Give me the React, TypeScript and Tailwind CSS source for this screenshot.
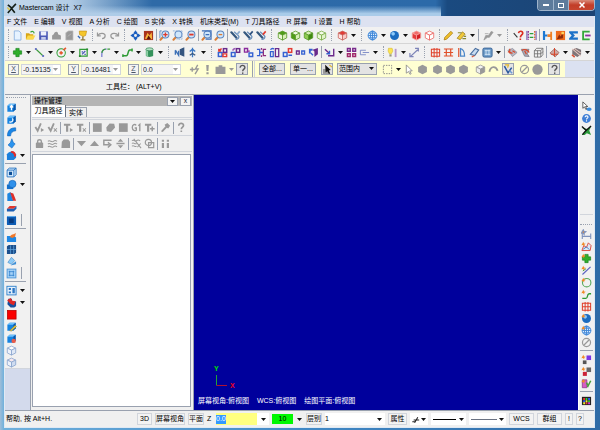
import type { ReactNode } from "react"
import clsx from "clsx"

const cube = (top: string, left: string, right: string, stroke: string) => (
  <g stroke={stroke} strokeWidth="0.9" strokeLinejoin="round">
    <path d="M6 1.2 10.6 3.4 6 5.6 1.4 3.4z" fill={top} />
    <path d="M1.4 3.4 6 5.6V11L1.4 8.6z" fill={left} />
    <path d="M10.6 3.4 6 5.6V11l4.6-2.4z" fill={right} />
  </g>
)

const magnifier = (mark: ReactNode) => (
  <g>
    <path d="M4.6 7.4 1.6 10.6" stroke="#d9803a" strokeWidth="2.2" strokeLinecap="round" />
    <circle cx="7" cy="5" r="3.8" fill="#cfe6fb" stroke="#5c86c0" strokeWidth="1.1" />
    {mark}
  </g>
)

const clipMark = (color: string) => (
  <g fill="none">
    <path d="M1.5 2.5 7 8.5" stroke="#35587f" strokeWidth="2.4" strokeLinecap="round" />
    <path d="M4.5 2 9 6c2 2-.6 5-3 3.6" stroke="#6f93bd" strokeWidth="1.5" />
    <path d="M7.5 5 10.6 1.5" stroke={color} strokeWidth="1.8" />
  </g>
)

const solid = (extra: ReactNode) => (
  <g>
    <path d="M1.5 4 4 1.8h6.5v6L8 10.5H1.5z" fill="#1683e0" />
    <path d="M1.5 4 4 1.8h6.5L8 4z" fill="#6fc0fb" />
    <path d="M8 4l2.5-2.2v6L8 10.5z" fill="#0a56ab" />
    {extra}
  </g>
)

const boxes = (a: string, b: string, link: ReactNode) => (
  <g fill="none" strokeWidth="1.6">
    <rect x="1.5" y="6" width="4" height="4.3" stroke={a} />
    <rect x="7" y="1.8" width="3.6" height="4" stroke={b} />
    {link}
  </g>
)

const hex = <path d="M6 .8 10.8 3.3v5.4L6 11.2 1.2 8.700v-5.400z" fill="#999" />
const spark = <path d="M2.5.8 3.3 2.6 5.2 3 3.6 4 3.4 6 2.2 4.4.4 4.6 1.4 3z" fill="#f08a24" />
const picture = (
  <g>
    <rect x="1" y="1" width="10" height="10" fill="#a9331d" />
    <path d="M2 9.5 5 3l2 3 2.5-3.5L10 10z" fill="#f7b23b" />
    <path d="M4 10 6 6l3 4z" fill="#5d160c" />
  </g>
)
const arrow = <path d="M2.5 1 9 7.5H6.3L7.8 10.6 6.5 11.2 5 8.2 2.5 10z" fill="#fff" stroke="#888" strokeWidth="0.9" />
const forbid = (
  <g fill="none" stroke="#999" strokeWidth="1.3">
    <circle cx="6" cy="6" r="4.4" />
    <path d="M3 9 9 3" />
  </g>
)
const globe = (
  <g fill="none" stroke="#3d85d8" strokeWidth="1">
    <circle cx="6" cy="6" r="4.8" fill="#dceeff" />
    <ellipse cx="6" cy="6" rx="2.2" ry="4.8" />
    <path d="M1.2 6h9.6M2 3.5h8M2 8.5h8M6 1.2v9.6" />
  </g>
)
const ball = (
  <g>
    <circle cx="6" cy="6" r="4.9" fill="#1b6cc0" />
    <circle cx="4.5" cy="4.2" r="2" fill="#8ecbfa" />
  </g>
)
const plus = <path d="M4.2 1.5h3.6v2.7h2.7v3.6H7.8v2.7H4.2V7.8H1.5V4.2h2.7z" fill="#2fae2b" stroke="#15801a" strokeWidth="0.7" />
const help = (
  <g fill="none" stroke="#555" strokeWidth="1.5">
    <path d="M3.4 4c0-3.4 5.4-3.2 5.2 0C8.500 5.6 6.2 5.7 6.2 8" />
    <path d="M6.2 9.2v1.6" />
  </g>
)
const grid = <path d="M1.500 2.500h9v7.500h-9zM1.500 6.200h9M4.500 1v10.500M7.600 1v10.500" fill="none" stroke="#e0402a" strokeWidth="1.1" />
const tick = (mark: ReactNode) => (
  <g fill="none" stroke="#999" strokeWidth="2">
    <path d="M1.500 5.500 4 9.500 7.500 1.500" />
    {mark}
  </g>
)
const tool = (mark: ReactNode) => (
  <g fill="none" stroke="#999">
    <path d="M1 3h7M4.500 3v7.500" strokeWidth="2.4" />
    {mark}
  </g>
)
const smallX = <path d="M7.4 6.8 10.8 10.4M10.8 6.8 7.4 10.4" strokeWidth="1.1" />
const smallPlay = <path d="M7.5 6.5v4.4L11 8.7z" fill="#999" stroke="none" />

const icons: Record<string, ReactNode> = {
  new: <path d="M2.5 1h5l2.300 2.300V11H2.500z" fill="#e6f2ff" stroke="#86aede" strokeWidth="0.9" />,
  open: (
    <g>
      <path d="M1 3.5h3.5l1 1H9V10H1z" fill="#d9a514" />
      <path d="M3 6h8.4L9 10.4H1z" fill="#fbd849" />
      <path d="M6 2.4c2-1.6 3.6-.8 4 1.2" fill="none" stroke="#39a336" strokeWidth="1.3" />
    </g>
  ),
  save: (
    <g>
      <path d="M1.3 1.5h9.4v9.2H1.3z" fill="#4a57b5" />
      <path d="M3 1.5h6V6H3z" fill="#eef1fb" />
      <path d="M3.5 7.6h5v3.1h-5z" fill="#c3c9ea" />
    </g>
  ),
  print: <path d="M3 4.500C4 .8 8.400 1 7.600 4.600L10.800 6v4.400H1.200V6z" fill="#999" />,
  page: <path d="M2 3 5 1h4.800v10H2zM4 7l4-3" fill="#999" stroke="#bbb" strokeWidth="0.8" />,
  trophy: (
    <g>
      <path d="M2.5 1.2h8L9.4 6 6.6 7.2 2.8 5z" fill="#f5c62a" stroke="#c48e10" strokeWidth="0.7" />
      <path d="M6.4 7v3.4M4 10.8h5" stroke="#8f7a3c" strokeWidth="1.5" />
      <path d="M1 6.4 3.4 9" stroke="#2b62b2" strokeWidth="1.4" />
    </g>
  ),
  undo: <path d="M1.6 2.8v3.6h3.6M2 6C4 2.6 10 3 10 6.4 10 8.4 8.4 9.4 6.6 9.4" fill="none" stroke="#999" strokeWidth="1.3" />,
  redo: <path d="M10.4 2.8v3.6H6.8M10 6C8 2.6 2 3 2 6.4c0 2 1.6 3 3.4 3" fill="none" stroke="#999" strokeWidth="1.3" />,
  pan: (
    <g>
      <path d="M6 .4 8.2 3.4H3.8zM6 11.6 3.8 8.6h4.4zM.4 6l3-2.2v4.4zM11.6 6l-3 2.2V3.8z" fill="#1d5fc0" />
      <circle cx="6" cy="6" r="2.3" fill="none" stroke="#1d5fc0" strokeWidth="1.4" />
    </g>
  ),
  picture,
  zoomFit: magnifier(
    <g>
      <path d="M7 2.6v4.8M4.6 5h4.8" stroke="#e03a2c" strokeWidth="1.5" />
      <path d="M1 1h2M1 1v8" stroke="#5c86c0" />
    </g>
  ),
  zoomWin: magnifier(<path d="M1 1h10v9H5" fill="none" stroke="#8fb2dd" strokeDasharray="2 1" />),
  zoomOut: magnifier(<path d="M4.6 5h4.8" stroke="#e03a2c" strokeWidth="2" />),
  zoomSel: magnifier(<path d="M1 1h10v9H5M5 5h4" fill="none" stroke="#3c6fba" strokeWidth="1.2" />),
  zoomHalf: magnifier(<path d="M5 5h4" stroke="#e07a2c" strokeWidth="1.4" />),
  rotA: clipMark("#88a8cc"),
  rotB: clipMark("#2b4f7d"),
  rotC: clipMark("#e23b2e"),
  cubeTop: cube("#4f9c18", "#eaf7d6", "#d8efb8", "#5a9a2a"),
  cubeFront: cube("#f1fae2", "#4f9c18", "#d8efb8", "#5a9a2a"),
  cubeRight: cube("#d8efb8", "#8fcb52", "#3f8a10", "#5a9a2a"),
  cubeIso: cube("#f4fbe9", "#eaf7d6", "#e0f2c8", "#79ad48"),
  cubeRed: cube("#e23a34", "#fde3e0", "#f9c9c5", "#c9635c"),
  redSolid: cube("#f26a68", "#e33b3b", "#d21f24", "#f5a09c"),
  redWire: cube("#fff", "#fff", "#fff", "#ec6a66"),
  globe,
  ball,
  pencil: <path d="M1.2 10.8 2 8 8.6 1.4l2 2L4 10z" fill="#f0c02a" stroke="#a67812" strokeWidth="0.8" />,
  erase: (
    <g>
      <path d="M1.2 9 7 2l3 2.4L4.6 10.6z" fill="#f0c93a" stroke="#9a7d20" strokeWidth="0.8" />
      <path d="M2 3h4M7 9.5h4M8.5 7h2.5" stroke="#8b8b30" strokeWidth="1.3" />
    </g>
  ),
  grayPen: <path d="M1 11 3 6h3L9 1.5l2 1L7 8H4.8zM2 4h4" fill="#999" stroke="#999" strokeWidth="0.8" />,
  query: (
    <g fill="none">
      <path d="M.8 3.5 4.800 8" stroke="#333" strokeWidth="1.2" />
      <path d="M6 3.4c.4-3 5-2.6 4.6.2C10.4 5.4 8.3 5.4 8 8M8 9.4v1.4" stroke="#dc2c20" strokeWidth="1.8" />
    </g>
  ),
  compare: (
    <g fill="none" strokeWidth="1.4">
      <path d="M2.5 1v10" stroke="#8b2f8f" strokeDasharray="2 1" />
      <path d="M9.5 1v10" stroke="#e0662a" strokeDasharray="2 1" />
      <path d="M4 4h4M4 8h4" stroke="#2c9e3a" />
      <path d="M1 1v10M11 1v10" stroke="#5b3ea3" strokeWidth="1" />
    </g>
  ),
  align: (
    <g>
      <path d="M1 1h2.4v10H1zM3 5h3v2H3z" fill="#1b78d2" />
      <path d="M6 4.5h3V2h2v9H9V7.5H6z" fill="#f08024" />
    </g>
  ),
  flame: (
    <g>
      <rect x="1" y="1" width="10" height="10" fill="#ee6b1c" />
      <path d="M2 10 4.6 5 6 7l3-4.5L8.6 9z" fill="#8e2a0c" />
      <circle cx="8.4" cy="3.4" r="1.6" fill="#ffd35c" />
    </g>
  ),
  sigma: <path d="M1.2 1.3h9.6v2.4H5.4L7.6 6 5.4 8.3h5.4v2.4H1.2V9L4 6 1.2 3z" fill="#1d72c8" />,
  exit: (
    <g fill="none" strokeWidth="2">
      <path d="M9.5 1.8H2.3v8.4h7.2" stroke="#35a83a" />
      <path d="M4.5 6h6" stroke="#8a2fa0" />
    </g>
  ),
  plus,
  line: (
    <g>
      <path d="M2 2.2 10 9.8" stroke="#3c9a3c" strokeWidth="1.2" />
      <path d="M1 1.2h2v2H1zM9 8.8h2v2H9z" fill="#6b73c9" />
    </g>
  ),
  circle: (
    <g fill="none">
      <circle cx="5.6" cy="6.4" r="4.6" stroke="#2e9b35" strokeWidth="1.1" />
      <path d="M5.6 4.6v3.6M3.8 6.4h3.6M8.200 3.4l2.600-2.400" stroke="#e5572e" strokeWidth="1.8" />
    </g>
  ),
  rect: (
    <g fill="none">
      <path d="M2 2.5h8V10H2z" stroke="#2e9b35" strokeWidth="1.3" />
      <path d="M4.4 8 8 4.4M4 5.4h1.5M7 8h1.5" stroke="#4658b8" strokeWidth="1.3" />
      <path d="M9 1.5h2v2H9zM1 9h2v2H1z" fill="#2b8a30" />
    </g>
  ),
  fillet: (
    <g fill="none">
      <path d="M2 11V7.6C2 4 4 2.2 7.4 2.2" stroke="#7076cf" strokeWidth="1.3" />
      <path d="M2 6.4C2.2 4 4 2.4 6.2 2.2M8 2.2h3" stroke="#3a9a3e" strokeWidth="1.4" />
    </g>
  ),
  spline: <path d="M1 9.6h3.6c3 0 1-6 4-6.4H11M1 8v3M11 1.6V5" fill="none" stroke="#2e9b35" strokeWidth="1.6" />,
  cylinder: (
    <g>
      <path d="M2 2.4v7.200C3.200 11.200 8.800 11.200 10 9.600V2.400z" fill="#34925b" />
      <path d="M2.400 2.4h2v8l-2-.8z" fill="#8fd0a6" />
      <ellipse cx="6" cy="2.5" rx="4" ry="1.6" fill="#b5e2c4" stroke="#2b7c4c" strokeWidth="0.7" />
    </g>
  ),
  mirror: (
    <g fill="none" strokeWidth="1.5">
      <path d="M1.5 3.5 5 9V4M1.5 3.5v5" stroke="#3b6fb6" />
      <path d="M10.5 1.5v8L7 8V3z" fill="#35557f" stroke="#35557f" />
    </g>
  ),
  axis: (
    <g fill="none" stroke="#3a78c4" strokeWidth="1.4">
      <path d="M6 .8v10.4M3 5l3-2.6L9 5" />
      <path d="M3 9l3-2 3 2" stroke="#35557f" />
    </g>
  ),
  xformA: boxes("#3461d2", "#6a2a8c", <path d="M2 4.5 5 1.6M2 2v2.5h2.6M6.5 7.5h4v3h-4z" stroke="#e23c35" />),
  xformB: boxes("#3461d2", "#6a2a8c", <path d="M3 4c.5-2 1.5-2.4 3-2.4" stroke="#9b59b6" />),
  xformC: (
    <g fill="none" strokeWidth="1.5">
      <path d="M1.600 1.600h3.400v4H1.600zM4 4.500h3.400" stroke="#8a2a9c" />
      <path d="M6.600 6.600h4v3.800h-4z" stroke="#3461d2" />
    </g>
  ),
  xformD: (
    <g fill="none" strokeWidth="1.4">
      <path d="M1 2.5h3v7H1M4 6h4" stroke="#3461d2" />
      <path d="M11 2.5H8v7h3M6 1v2M6 9v2" stroke="#8a2a7c" />
    </g>
  ),
  xformE: (
    <g fill="none" strokeWidth="1.4">
      <path d="M1.6 5h3v5.4h-3zM1.6 3c1-1.6 2.4-1.6 4-1" stroke="#3461d2" />
      <path d="M7 1.8h3.6v8.6H7z" stroke="#6a2a8c" />
    </g>
  ),
  xformF: boxes("#3461d2", "#e23c35", <path d="M7 9h4" stroke="#3461d2" />),
  xformG: (
    <g fill="none" strokeWidth="1.5">
      <path d="M1.6 4.4h3v3.4h-3z" stroke="#6a2a8c" />
      <path d="M7.4 4.4h3v3.4h-3z" stroke="#3461d2" />
    </g>
  ),
  xformH: (
    <g>
      <path d="M1 2h4v2H3v3H1z" fill="#3461d2" />
      <path d="M5 3 10.8 1v7L7 11V5z" fill="#6a2a8c" />
      <path d="M3 6.5 5.5 9" stroke="#3461d2" strokeWidth="1.4" />
    </g>
  ),
  trim: (
    <g fill="none" strokeWidth="1.5">
      <path d="M1 2.4 6 7M4.4 9.6h6.2V2" stroke="#6a2a8c" />
      <path d="M2.6 7.4H6V4" stroke="#3461d2" />
    </g>
  ),
  array: (
    <g fill="none" strokeWidth="1.6">
      <path d="M1.6 1.6h3v3h-3zM7.4 1.6h3v3h-3z" stroke="#7a2a8c" />
      <path d="M1.6 7.4h3v3h-3zM7.4 7.4h3v3h-3z" stroke="#a02a6c" />
    </g>
  ),
  stretch: <path d="M1.5 3.5h6M1.5 8.5h6M1.5 3.5v5M4 6h7" fill="none" stroke="#8592c9" strokeWidth="1.1" />,
  bulb: (
    <g>
      <path d="M1.6 1.4h4l.8 3-1.6 3H2.6l-1.4-3z" fill="#fbe451" stroke="#d4b52a" strokeWidth="0.6" />
      <path d="M2.6 8h2.4v2.4H2.6z" fill="#9a9a78" />
      <path d="M9.4 2v9" stroke="#b79ac9" strokeWidth="2" />
    </g>
  ),
  measure: <path d="M2 10 9.5 3M6.6 1.6h3.6V5M1 6.6v4h4" fill="none" stroke="#7d84b8" strokeWidth="1.3" />,
  grid,
  ruled: <path d="M1 2.2h10M1 6h10M1 9.8h10M3.6 2v8M8.4 2v8" fill="none" stroke="#e0502a" strokeWidth="1.3" />,
  revolve: (
    <g fill="none" strokeWidth="1.3">
      <path d="M3 1v10" stroke="#e0502a" />
      <path d="M5 1.6c3 1 4.4 5 4.4 8.4H5z" stroke="#4a86c8" />
    </g>
  ),
  sweep: (
    <g fill="none" stroke="#4a6f9f" strokeWidth="1.2">
      <path d="M1.4 8 7 1.6l3.6 1.6-4.4 6.2z" fill="#c9dcf2" />
      <path d="M3 11 6 9.4" stroke="#e0502a" />
    </g>
  ),
  net: (
    <g>
      <rect x="1" y="1.2" width="10" height="9.8" rx="1.5" fill="#6f9cc8" stroke="#335f93" />
      <path d="M3 4h6M3 8h6M4.4 3v6M7.6 3v6" stroke="#dcebfa" strokeWidth="0.9" />
    </g>
  ),
  surfA: (
    <g>
      <path d="M1 3.6 6 1.6 11 6 6 10.4z" fill="#b9b9c4" stroke="#7c7c8c" strokeWidth="0.7" />
      <path d="M3 2v5M1 5l5 2M6 4l3 2" stroke="#d8482c" strokeWidth="1.3" />
    </g>
  ),
  surfB: (
    <g>
      <path d="M1.4 2.5h8.4L8 7.4l2 3L5 10z" fill="#a8a8b4" stroke="#6a6a78" strokeWidth="0.7" />
      <path d="M2 4c3-3 7 0 8 2M5 4l2 4" fill="none" stroke="#d8482c" strokeWidth="1.3" />
    </g>
  ),
  wire: <path d="M1.5 4h7v7h-7zM1.5 4 4 1.4h6.8L8.5 4M8.5 11l2.3-2.6v-7M1.5 7.4h7l2.3-2.4M5 4v7" fill="none" stroke="#6c6c6c" strokeWidth="0.9" />,
  surfC: (
    <g>
      <path d="M1 6.6 6 2l5 4-4 4.6z" fill="#cfa9a4" stroke="#8b5450" strokeWidth="0.7" />
      <path d="M6 1v9.6M2 8h8" stroke="#d8482c" strokeWidth="1.1" />
    </g>
  ),
  surfD: (
    <g>
      <path d="M1.4 3 6 1l5 2v5l-4 3-5.6-3z" fill="#7d7478" />
      <path d="M1.4 2 10.6 10M3.5 1.5l7 5" stroke="#e4c4bc" strokeWidth="1.1" />
      <path d="M1 8.4 4 11" stroke="#d8482c" strokeWidth="1.6" />
    </g>
  ),
  fast: <path d="M1 6h5M3.5 3.5v5M9.5 1 7 5.4h3L6.6 11" fill="none" stroke="#999" strokeWidth="1.5" />,
  bang: <path d="M4.6 1h2.8L7 7.6H5zM4.8 9h2.4v2.2H4.8z" fill="#999" />,
  toolbox: <path d="M4 1.4h4V3h3.4v8H.6V3H4z" fill="#999" />,
  help,
  pick: (
    <g>
      <rect x="1" y="5.4" width="6" height="5.4" fill="#999" />
      <path d="M3.4.8 9.6 6.6 7.4 7 9 10.4 7.4 11 6 7.8 4 9z" fill="#111" />
      <path d="M8 1.2 11 3.4" stroke="#e2b82c" strokeWidth="1.3" />
    </g>
  ),
  dash: <path d="M1.5 1.5h9v9h-9z" fill="none" stroke="#888" strokeDasharray="1.6 1.2" />,
  arrow,
  hex,
  grayCube: cube("#f2f2f2", "#ececec", "#999", "#999"),
  curve: <path d="M1.5 8.4C3 2 8.6 2 10.5 7.4" fill="none" stroke="#999" strokeWidth="2" />,
  selFlag: (
    <g fill="none">
      <path d="M1.5 2.4 5.5 9.6 9.5 4" stroke="#2d5a9c" strokeWidth="1.7" />
      <path d="M2 1h4l-1 3" stroke="#e2b82c" strokeWidth="1.4" />
      <path d="M7 7l3 3" stroke="#6b9bd2" strokeWidth="1.6" />
    </g>
  ),
  forbid,
  disc: <circle cx="6" cy="6" r="5.6" fill="#999" />,

  extrude: solid(<path d="M6 9V4.4M4.2 6 6 3.8 7.8 6" fill="none" stroke="#fff" strokeWidth="1.4" />),
  turn: solid(<path d="M3.6 8.6c4 .8 4.6-2 3.4-3.8" fill="none" stroke="#fff" strokeWidth="1.4" />),
  sweepBlue: <path d="M1.6 10.8C1.4 5 5 1.6 10.6 2v3.4C7 5.4 5.4 7 5 10.8z" fill="#1a86e6" stroke="#0b60b5" strokeWidth="0.6" />,
  loft: <path d="M6.4.8 8 5l2 1.4L6.4 11 2.2 7.6 4.8 5z" fill="#2b94ee" stroke="#0b60b5" strokeWidth="0.6" />,
  filletRed: (
    <g>
      <path d="M1 4.6C3 1.4 6 1 8 2l3 3v3.4l-2.6 2.4H1z" fill="#1a7fdc" />
      <path d="M6 1.2c3 0 5 2 5 5L9 8C9 5 8 3 5 2.6z" fill="#e32a26" />
    </g>
  ),
  shell: (
    <g fill="none">
      <path d="M1.200 3.400 3.600 1.200h7.400v7.200l-2.400 2.400H1.200z" fill="#d6ebfd" stroke="#2a74c2" />
      <path d="M1.200 3.400h7.400v7.400M8.600 3.400 11 1.200" stroke="#2a74c2" />
      <rect x="3.200" y="5.200" width="3.400" height="3.600" fill="#0b4d96" />
    </g>
  ),
  bool: (
    <g>
      <path d="M1 6h7v5H1z" fill="#1570cc" />
      <circle cx="7" cy="5.400" r="4" fill="#2f90ea" stroke="#0e5cab" strokeWidth="0.6" />
    </g>
  ),
  draft: (
    <g>
      <path d="M1.4 3 5 1.2l3 9.6H1.4z" fill="#1d86e0" />
      <path d="M4.6 1.6 8 2.6l3 8H7.6z" fill="#e0302a" />
    </g>
  ),
  slab: (
    <g>
      <path d="M1 6.4 4 3.4h7.4l-3 3z" fill="#e0362c" />
      <path d="M1 6.4h7.4v3H1zM8.4 6.4l3-3v3l-3 3z" fill="#1c5fb4" />
    </g>
  ),
  block: (
    <g>
      <rect x="1" y="1.2" width="10" height="9.8" rx="1" fill="#0e5cb4" />
      <rect x="3.4" y="3.8" width="5" height="5" fill="#07397d" />
      <path d="M1.4 1.6h9" stroke="#69b4f2" />
    </g>
  ),
  moveSolid: (
    <g>
      <path d="M1 4.400h8l2 1.600v5H1z" fill="#1e88e5" />
      <path d="M4 5.4C6 2 8 3 10.8 1L10 5 7 6.6z" fill="#f0782a" />
    </g>
  ),
  mesh: (
    <g>
      <path d="M1 2.4 3 1h8v8.6L9.4 11H1z" fill="#1c4f8c" />
      <path d="M1 6h10M5 1.5V11M8.4 1.5V11" stroke="#5fa6e0" strokeWidth="0.8" />
    </g>
  ),
  face: (
    <g>
      <path d="M2 7 6 1.4 9.4 5 6 9z" fill="#8ccaf7" stroke="#4a90cc" strokeWidth="0.7" />
      <path d="M5 10.4 11 9V5.6L8 8z" fill="#3d8fd6" />
    </g>
  ),
  pattern: (
    <g>
      <rect x="1.2" y="1.2" width="9.6" height="9.6" fill="#a5d2f7" stroke="#4c96d8" />
      <path d="M3 4h6M3 8h6M4 3v6M8 3v6" stroke="#3684cf" strokeWidth="0.9" />
    </g>
  ),
  layout: (
    <g>
      <rect x="1" y="1.4" width="10" height="9.4" fill="#e4f1fd" stroke="#2d7fcb" />
      <path d="M3 3.4h2.4v2H3zM3 7h2.4v2H3zM7 3.4h2.6V9H7z" fill="#2c76c4" />
    </g>
  ),
  redBlue: (
    <g>
      <path d="M2.500 2h4v3h4.500v5l-2 1.500H5L1.500 8z" fill="#174f9c" />
      <path d="M1.200 3.600 5 1.200 7 4l3.600.6L8.600 9 5 7.600z" fill="#e02624" />
    </g>
  ),
  red: <rect x="1.500" y="1.500" width="9.500" height="9.500" fill="#fb0000" stroke="#b40000" strokeWidth="0.8" />,
  editSolid: solid(<path d="M4 10.6 10 4.6l1.4 1.4-5.6 5z" fill="#efca3a" stroke="#8d7a1e" strokeWidth="0.5" />),
  delSolid: solid(<circle cx="8.4" cy="8.6" r="2.4" fill="#e85c4a" />),
  wireCube: cube("#fff", "#eef3fb", "#dfe8f6", "#8ba5cf"),
  wireCubeB: cube("#f7e9ee", "#eef3fb", "#cfdcf0", "#8ba5cf"),

  checkAll: tick(smallPlay),
  checkNone: tick(smallX),
  toolPlay: tool(smallPlay),
  toolX: tool(smallX),
  toolPlus: tool(<path d="M9 5v5M6.6 7.4h5" strokeWidth="1.6" />),
  square: <rect x="1" y="1.4" width="9.6" height="9.4" fill="#999" />,
  blob: <path d="M1.4 6 5 1.6 10 2l1 4-4.4 4.8L2 10z" fill="#999" />,
  g1: (
    <g fill="none" stroke="#999" strokeWidth="1.5">
      <path d="M5.6 3.6C4.4 2 1.4 2.6 1.4 6S4.8 10 5.8 8.8V6.6H4M8 4l1.6-1.4V10" />
    </g>
  ),
  wrench: <path d="M1 10 6 4.6 5 3l3-2 3 3-2 3-1.6-.8L3 11zM2 3h2" fill="#999" />,
  ask: <path d="M3 4c0-3.400 5.400-3.200 5.200 0C8.100 5.600 5.800 5.700 5.800 8M5.800 9.200v1.800" fill="none" stroke="#999" strokeWidth="1.8" />,
  lock: (
    <g fill="#999">
      <rect x="2" y="5" width="8" height="6" rx="1" />
      <path d="M4 5.4V3.4c0-2 4-2 4 0v2" fill="none" stroke="#999" strokeWidth="1.5" />
    </g>
  ),
  waves: <path d="M1 3.6c2-2 4 1.6 6 0s3-.6 4 0M1 6.6c2-2 4 1.6 6 0s3-.6 4 0M1 9.6c2-2 4 1.6 6 0s3-.6 4 0" fill="none" stroke="#999" strokeWidth="1.1" />,
  lockDoc: <path d="M2 4 4 1.6h5L11 4v7H1.6z" fill="#999" />,
  down: <path d="M1 3.4h10L6 9z" fill="#999" />,
  up: <path d="M1 8.6h10L6 3z" fill="#999" />,
  insert: <path d="M10.4 2.4H2v5h6M6.4 4.8 9.6 7.4 6.4 10.4" fill="none" stroke="#999" strokeWidth="1.6" />,
  updown: <path d="M6 .8 9 4H3zM6 11.2 3 8h6zM1.6 5.2h8.8v1.6H1.6z" fill="#999" />,
  wavesX: (
    <g fill="none" stroke="#999" strokeWidth="1.1">
      <path d="M1 3c2-2 3 1.6 5 0s3-.6 4 0M1 6c2-2 3 1.6 5 0M1 9c2-2 3 1.6 5 0M3 1l8 10M10.6 6 7 10" />
    </g>
  ),
  clash: (
    <g fill="none" stroke="#999" strokeWidth="1.3">
      <circle cx="4.8" cy="4.8" r="3.4" />
      <path d="M5 5h5.6v5.6H5z" />
    </g>
  ),
  pair: <path d="M2 2h2.400v2H2zM7.400 2h2.400v2H7.400zM2 5.400h2.400V11H2zM7.400 5.400h2.400V11H7.400z" fill="#999" />,

  select: (
    <g>
      <path d="M2 1v7l1.8-1.6 1.6 3 1-.6L5 6h2.4z" fill="#fff" stroke="#333" strokeWidth="0.8" />
      <ellipse cx="8.8" cy="9" rx="2.8" ry="1.8" fill="#3b8ee0" />
    </g>
  ),
  info: (
    <g>
      <circle cx="6" cy="6" r="4.8" fill="#3f7fd6" />
      <path d="M4.4 4.6c.2-2 3.4-1.8 3.2 0C7.5 5.6 6 5.6 6 7M6 8v1.2" fill="none" stroke="#fff" strokeWidth="1.2" />
    </g>
  ),
  logo: (
    <g>
      <path d="M1 3 5 6l-4 5h3l2.4-2L11 11 9 6l2-4.500L7 4.4z" fill="#2c9a3a" />
      <path d="M1 1.6 6 6M11 1 5 6.500 1.500 10.500" fill="none" stroke="#111" strokeWidth="1.4" />
    </g>
  ),
  appLogo: (
    <g>
      <path d="M2 2 6.500 5.500 10.800 1M6 6 2 11M6 6l3.600 4.600" fill="none" stroke="#15201a" strokeWidth="1.8" />
      <path d="M1.500 5 4 7.500" stroke="#d8c44a" strokeWidth="1.600" />
    </g>
  ),
  dim: (
    <g fill="none" stroke="#7f93bd" strokeWidth="1.2">
      <path d="M1.4 2v9M10.6 5v6M2 8h8" />
      {spark}
    </g>
  ),
  redWave: (
    <g>
      <path d="M1 10.4 3 5l3 2 2-5 3 3-1 5.4z" fill="#dbe9f7" stroke="#dd4436" />
      <path d="M2.4 9 6 6.4l3 3" fill="none" stroke="#3c78c0" />
      {spark}
    </g>
  ),
  sparkLine: (
    <g>
      <path d="M1.6 10.4 10.4 2" stroke="#5a62c2" strokeWidth="1.3" />
      <path d="M2 6.5 5.5 4" stroke="#37963a" />
      {spark}
    </g>
  ),
  sparkPlus: <g>{plus}{spark}</g>,
  sparkCircle: (
    <g>
      <circle cx="6.2" cy="6.2" r="4.6" fill="none" stroke="#58a85a" strokeWidth="1.2" />
      {spark}
    </g>
  ),
  sparkSpline: (
    <g>
      <path d="M1.4 10.2h4c2.6 0 .6-4.6 3.4-5H11" fill="none" stroke="#2e9b35" strokeWidth="1.5" />
      {spark}
    </g>
  ),
  sparkBall: <g>{ball}{spark}</g>,
  sparkGlobe: <g>{globe}{spark}</g>,
  purple: (
    <g>
      <path d="M6 1.6h5v5H6z" fill="#7a34e6" />
      <path d="M2 7h4v4H2z" fill="#555" />
      {spark}
    </g>
  ),
  redGray: (
    <g>
      <path d="M6 1.6h5v5H6z" fill="#666" />
      <path d="M2 6.4h4.4v4.4H2z" fill="#cc2236" />
      {spark}
    </g>
  ),
  magenta: (
    <g>
      <path d="M1.4 2h5v8.6h-5z" fill="#d65cc4" stroke="#8c2f88" strokeWidth="0.8" />
      <path d="M7 10 10.6 3M6 5l2 4" stroke="#48a03c" strokeWidth="1.7" />
      {spark}
    </g>
  ),
  palette: (
    <g>
      <rect x="1" y="2" width="10" height="9" fill="#222" />
      <path d="M2.4 3.4h2v2h-2zM5 8h2v2H5z" fill="#e33" />
      <path d="M5 3.4h2v2H5zM7.8 5.8h2v2h-2z" fill="#3c3" />
      <path d="M7.8 3.4h2v2h-2zM2.4 5.8h2v2h-2z" fill="#35f" />
      <path d="M5 5.8h2v2H5zM2.4 8h2v2h-2z" fill="#ee3" />
      <path d="M7.8 8h2v2h-2z" fill="#d3d" />
    </g>
  ),
  point: <path d="M5 9.500 8.500 3.500M4 6.500h6M2.500 8.500h3" stroke="#222" strokeWidth="1.2" />,
}

const Icon = ({ name }: { name: string }) => (
  <svg viewBox="0 0 12 12" className="size-[11px] shrink-0" aria-hidden="true">{icons[name]}</svg>
)

const Triangle = ({ gray = false }: { gray?: boolean }) => (
  <svg viewBox="0 0 5 3" className="w-[5px] h-[3px] shrink-0" aria-hidden="true">
    <path d="M0 0h5L2.5 3z" fill={gray ? "#999" : "#111"} />
  </svg>
)

// ":" grip, "|" divider, "_" spacer, "v" drop-down arrow, anything else is an icon name
const Tools = ({ items, vertical = false }: { items: string; vertical?: boolean }) => (
  <>
    {items.split(" ").map((item, i) => {
      if (item === ":") {
        return <span key={i} className="w-[6px] h-3 shrink-0 flex justify-center"><i className="border-l border-dotted border-gray-400" /></span>
      }
      if (item === "|") {
        return vertical
          ? <span key={i} className="h-[5px] w-full shrink-0 flex items-center"><i className="flex-1 border-t border-gray-400" /></span>
          : <span key={i} className="w-[3px] h-3 shrink-0 flex justify-center"><i className="border-l border-gray-400" /></span>
      }
      if (item === "_") return <span key={i} className="w-[2px] shrink-0" />
      if (item === "v" || item === "v-") {
        return (
          <button key={i} type="button" aria-label="more" className="w-[9px] h-3 shrink-0 flex items-center justify-center">
            <Triangle gray={item === "v-"} />
          </button>
        )
      }
      return (
        <button key={i} type="button" aria-label={item} className="w-[13px] h-3 shrink-0 flex items-center justify-center">
          <Icon name={item} />
        </button>
      )
    })}
  </>
)

const ToolRow = ({ items }: { items: string }) => (
  <div className="h-[17px] flex items-center overflow-hidden bg-[#f1f1f1] border-b border-[#d5d5d5]">
    <Tools items={items} />
  </div>
)

const Coord = ({ axis, value }: { axis: string; value: string }) => (
  <div className="flex items-center gap-[2px] w-[60px] shrink-0">
    <button type="button" aria-label={"lock " + axis} className="size-[11px] border border-gray-400 bg-[#f4f4f4] flex items-center justify-center underline text-gray-600">{axis}</button>
    <div className="flex items-center w-10 h-[11px] bg-white border border-gray-300 pr-[2px]">
      <input aria-label={axis} defaultValue={value} className="min-w-0 flex-1 h-full pl-px bg-[#f4f4f4] text-gray-900 outline-none" />
      <Triangle gray />
    </div>
  </div>
)

const boxed = "h-3 border border-gray-400 bg-[#e3e3e3] flex items-center justify-center shrink-0"

const menus = ["F 文件", "E 编辑", "V 视图", "A 分析", "C 绘图", "S 实体", "X 转换", "机床类型(M)", "T 刀具路径", "R 屏幕", "I 设置", "H 帮助"]

const sideRows = [
  "extrude", "turn", "sweepBlue", "loft", "filletRed v", "|",
  "shell", "bool v", "draft", "slab", "block _ |", "|",
  "moveSolid", "mesh", "face", "pattern _ |", "|",
  "layout v", "redBlue v", "red", "editSolid", "delSolid", "wireCube", "wireCubeB",
]

const rightTop = ["select", "info", "logo"]
const rightBottom = ["dim", "redWave", "sparkPlus", "sparkLine", "sparkCircle", "sparkSpline", "grid", "sparkBall", "sparkGlobe", "forbid", "|", "purple", "redGray", "magenta", "|", "palette"]

const TitleBar = () => (
  <header className="relative h-4 flex items-center pl-[2px] bg-[linear-gradient(90deg,#2f6aa6_0%,#2c6aa9_73%,#1a4a80_75%,#1c4474_100%)]">
    <div className="absolute left-0 bottom-0 w-[74%] h-4 bg-[linear-gradient(180deg,transparent_35%,#a9cbe9_85%)]" />
    <div className="absolute left-0 bottom-0 w-1/4 h-4 bg-[linear-gradient(90deg,#c3d7ea_0%,#b3cde6_45%,transparent_100%)]" />
    <div className="relative flex items-center flex-1">
      <Icon name="appLogo" />
      <h1 className="ml-[2px] whitespace-pre text-black">Mastercam 设计  X7</h1>
    </div>
    <div className="self-start flex h-[11px] border border-t-0 border-[#9fb4cb] rounded-b-sm overflow-hidden">
      <button type="button" aria-label="minimize" className="w-[15px] bg-[#5d7b9b] flex items-center justify-center"><i className="w-[6px] h-[2px] bg-white" /></button>
      <button type="button" aria-label="maximize" className="w-[15px] bg-[#5d7b9b] border-l border-[#9fb4cb] flex items-center justify-center"><i className="w-[6px] h-[5px] border border-white" /></button>
      <button type="button" aria-label="close" className="w-[26px] bg-[linear-gradient(180deg,#d98a78_0%,#c23d28_50%,#c7452f_100%)] border-l border-[#9fb4cb] flex items-center justify-center">
        <svg viewBox="0 0 6 6" className="size-[6px]"><path d="M.5.5 5.5 5.5M5.5.5.5 5.5" stroke="#fff" strokeWidth="1.5" /></svg>
      </button>
    </div>
  </header>
)

const Manager = () => (
  <section className="w-[164px] shrink-0 flex flex-col border-x border-gray-400 bg-[#f0f0f0] px-px">
    <div className="h-[10px] mt-px flex items-center gap-[2px] pl-[2px] bg-[#b4b4b4]">
      <h2 className="flex-1 text-black">操作管理</h2>
      <button type="button" aria-label="panel menu" className="w-[11px] h-[9px] bg-[#f3f3f3] border border-gray-400 flex items-center justify-center"><Triangle /></button>
      <button type="button" aria-label="close panel" className="w-[11px] h-[9px] mr-px bg-[#f3f3f3] border border-gray-400 flex items-center justify-center">x</button>
    </div>
    <div role="tablist" className="flex items-end h-3 border-b border-gray-300">
      <button role="tab" aria-selected="true" className="w-[34px] h-3 bg-white border-r border-gray-500 text-black">刀具路径</button>
      <button role="tab" aria-selected="false" className="w-[21px] h-[10px] border-r border-t border-gray-400 text-black">实体</button>
    </div>
    <div className="flex items-center h-4 mt-px border-t border-gray-300">
      <span className="w-px" />
      <Tools items="checkAll checkNone | toolPlay toolX | square blob square g1 toolPlus | wrench | ask" />
    </div>
    <div className="flex items-center h-[17px] border-y border-gray-300">
      <span className="w-px" />
      <Tools items="lock waves lockDoc | down up insert updown | wavesX clash | pair" />
    </div>
    <div className="flex-1 mt-[2px] mb-[3px] mr-px bg-white border border-gray-400" />
  </section>
)

const Canvas = () => (
  <main className="flex-1 min-w-0 flex flex-col justify-end bg-[#00009c] border-r border-white">
    <svg viewBox="0 0 40 30" className="w-10 h-[30px] ml-[18px] mb-px" fontFamily="Liberation Sans" fontSize="7" fontWeight="700">
      <path d="M4.500 10V20.500" stroke="#1fa03c" />
      <path d="M4.500 20.500H15" stroke="#b01230" />
      <text x="2" y="6" fill="#00e000">Y</text>
      <text x="18" y="23" fill="#f00020">X</text>
    </svg>
    <p className="flex gap-2 pl-1 pb-1 text-white leading-[10px]">
      <span>屏幕视角:俯视图</span>
      <span>WCS:俯视图</span>
      <span>绘图平面:俯视图</span>
    </p>
  </main>
)

const statusButton = "h-3 shrink-0 border border-gray-300 bg-[#f3f3f3] text-center text-black"

const StatusBar = () => (
  <footer className="h-[17px] flex items-center gap-[3px] border-t border-gray-400 bg-[#f0f0f0] pr-[10px] whitespace-nowrap">
    <p className="flex-1 text-black pl-px">帮助, 按 Alt+H.</p>
    <button type="button" className={clsx(statusButton, "w-[15px]")}>3D</button>
    <button type="button" className={clsx(statusButton, "w-[30px]")}>屏幕视角</button>
    <button type="button" className={clsx(statusButton, "w-4")}>平面</button>
    <label htmlFor="depth" className="w-[6px] text-black">Z</label>
    <div className="flex items-center w-[53px] h-3 bg-white pr-[3px]">
      <div className="flex items-center w-[41px] h-3 bg-[#ffff80] mr-auto">
        <input id="depth" defaultValue="0.0" className="w-[10px] h-[9px] bg-[#3399ff] text-white outline-none" />
      </div>
      <Triangle />
    </div>
    <button type="button" className="w-[21px] h-[10px] bg-[#00f800] text-black">10</button>
    <button type="button" aria-label="color list" className="w-[7px] h-3 flex items-center justify-center"><Triangle /></button>
    <button type="button" className={clsx(statusButton, "w-4")}>层别</button>
    <div className="flex items-center w-[60px] h-3 bg-white pr-[3px]">
      <input aria-label="层别" defaultValue="1" className="min-w-0 flex-1 bg-white text-black outline-none" />
      <Triangle />
    </div>
    <button type="button" className={clsx(statusButton, "w-[19px]")}>属性</button>
    <button type="button" aria-label="point style" className="w-[18px] h-3 bg-white flex items-center justify-between pr-[2px]"><Icon name="point" /><Triangle /></button>
    <button type="button" aria-label="line style" className="w-[35px] h-3 bg-white flex items-center justify-between px-[2px]"><i className="w-[23px] h-px bg-black" /><Triangle /></button>
    <button type="button" aria-label="line width" className="w-[37px] h-3 bg-white flex items-center justify-between px-[2px]"><i className="w-[26px] h-px bg-gray-500" /><Triangle /></button>
    <button type="button" className={clsx(statusButton, "w-[25px]")}>WCS</button>
    <button type="button" className={clsx(statusButton, "w-[25px]")}>群组</button>
    <button type="button" className={clsx(statusButton, "w-2")}>!</button>
    <button type="button" className={clsx(statusButton, "w-2")}>?</button>
  </footer>
)

const App = () => {
  return (
    <div className="h-screen min-h-[400px] flex flex-col overflow-hidden pl-1 pr-[5px] pb-[2px] bg-[linear-gradient(90deg,#9fbdd8_0,#6fb0dc_4px,#4189c6_50%,#2f6ba6_100%)] font-['Liberation_Sans','Noto_Sans_CJK_SC',sans-serif] text-[7px] leading-[10px] text-gray-800">
      <TitleBar />
      <div className="flex-1 min-h-0 flex flex-col border-x border-b border-[#dfe9f4] bg-[#f0f0f0]">
        <nav className="h-[11px] flex items-center gap-[7px] pl-[2px] bg-[#dde2f1] whitespace-nowrap">
          {menus.map((menu) => (
            <button key={menu} type="button" className="text-black">{menu}</button>
          ))}
        </nav>
        <ToolRow items=": new open save print page trophy : undo redo : _ pan picture | zoomFit zoomWin zoomOut | zoomSel zoomHalf | rotA rotB rotC : _ cubeTop cubeFront cubeRight cubeIso : _ cubeRed v : _ globe v ball v redSolid redWire : pencil erase v | _ grayPen v- : _ query compare | align flame sigma exit" />
        <ToolRow items=": plus v line v circle v rect v fillet v spline v cylinder v : _ mirror axis v : _ xformA xformB xformC xformD xformE xformF xformG xformH | trim v array stretch v : bulb v measure : _ grid ruled revolve sweep net v | surfA surfB wire | surfC v surfD v" />
        <div className="h-[17px] flex bg-[#dbe1f1] border-b border-[#d0d0d0]">
          <div className="w-[560px] flex items-center pl-[3px] bg-[#ffffd2]">
            <Coord axis="X" value="-0.15135" />
            <Coord axis="Y" value="-0.16481" />
            <Coord axis="Z" value="0.0" />
            <Tools items="fast bang toolbox v-" />
            <button type="button" aria-label="help" className={clsx(boxed, "w-3")}><Icon name="help" /></button>
            <span className="w-[7px] h-4 ml-1 border-l border-gray-400 flex pl-px"><i className="border-l border-gray-300" /></span>
            <button type="button" className={clsx(boxed, "w-[26px] text-black")}>全部...</button>
            <button type="button" className={clsx(boxed, "w-[26px] ml-[5px] text-black")}>单一...</button>
            <button type="button" aria-label="pick" className={clsx(boxed, "w-3 ml-[5px]")}><Icon name="pick" /></button>
            <div className="relative ml-1 w-10 h-3 shrink-0 flex">
              <select aria-label="selection" className="w-full h-3 appearance-none border border-gray-400 bg-[#e3e3e3] pl-px text-black">
                <option>范围内</option>
              </select>
              <span className="absolute right-[3px] top-1 flex pointer-events-none"><Triangle /></span>
            </div>
            <span className="w-1 shrink-0" />
            <Tools items="dash v arrow hex _ hex hex hex _ _ grayCube curve _" />
            <button type="button" aria-label="selFlag" className={clsx(boxed, "w-3")}><Icon name="selFlag" /></button>
            <Tools items="_ _ forbid disc _ _" />
            <button type="button" aria-label="about" className={clsx(boxed, "w-3")}><Icon name="help" /></button>
          </div>
        </div>
        <p className="h-[17px] shrink-0 pl-[101px] leading-[17px] text-black border-b border-gray-400">工具栏： (ALT+V)</p>
        <div className="flex-1 min-h-0 flex">
          <aside className="w-[25px] shrink-0 flex flex-col bg-[#d3daec]">
            <div className="bg-[#f1f1f1] pt-[2px] border-b border-gray-300">
              <i className="block w-5 h-1 ml-px border-t border-dotted border-gray-400" />
              {sideRows.map((row, i) => (
                <div key={i} className="flex items-center pr-1"><Tools items={row} vertical={row === "|"} /></div>
              ))}
            </div>
          </aside>
          <Manager />
          <Canvas />
          <aside className="w-[15px] shrink-0 flex flex-col justify-between items-center bg-[#f1f1f1] overflow-hidden">
            <div className="pt-[5px] flex flex-col">
              {rightTop.map((name) => <Tools key={name} items={name} />)}
            </div>
            <div className="flex flex-col border-t border-gray-300 pb-1">
              <i className="block w-3 h-1 mt-[9px] border-t border-dotted border-gray-400" />
              {rightBottom.map((name, i) => <Tools key={i} items={name} vertical />)}
            </div>
          </aside>
        </div>
        <StatusBar />
      </div>
    </div>
  )
}

export default App
